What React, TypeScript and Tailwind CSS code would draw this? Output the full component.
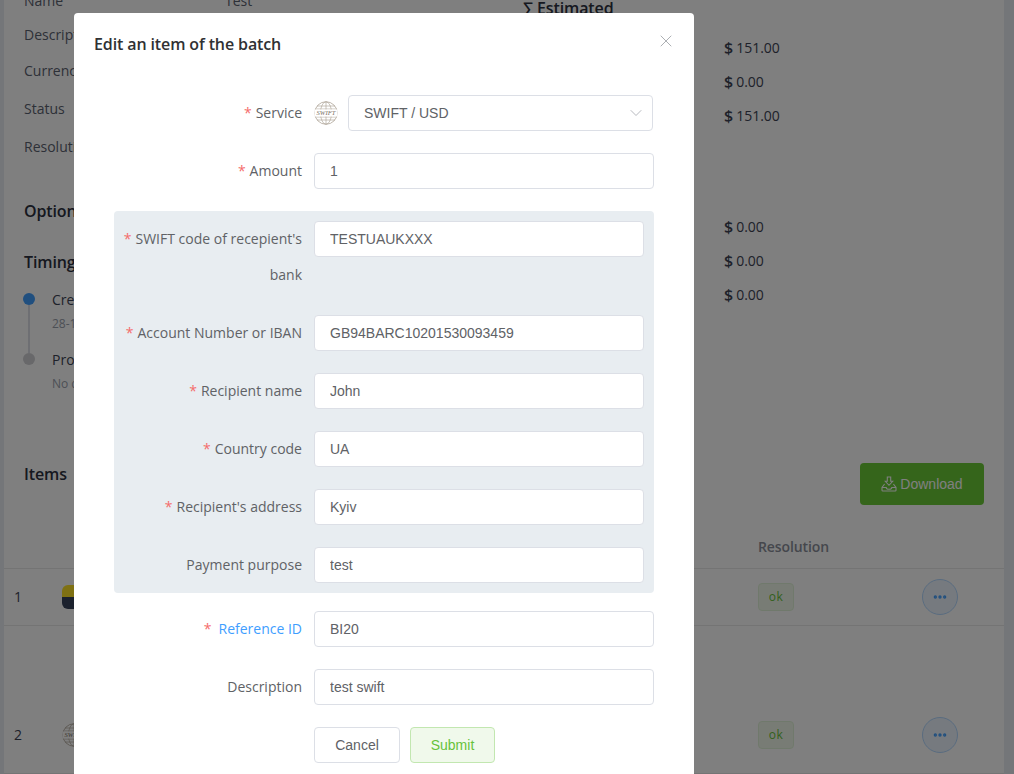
import { ChevronDown, MoreHorizontal, X } from 'lucide-react';

const sans = "font-['Open_Sans',sans-serif]";
const arial = "font-['Liberation_Sans',Arial,sans-serif]";

const SwiftLogo = ({ size }: { size: number }) => (
  <svg width={size} height={size} viewBox="0 0 48 48" fill="none" stroke="#aea598" strokeWidth="1.3">
    <circle cx="24" cy="24" r="22.5" strokeWidth="1.6" />
    <ellipse cx="24" cy="24" rx="11" ry="22.5" />
    <path d="M24 1.5v45M6 10h36M3 16h42M3 32h42M6 38h36" />
    <rect x="1" y="17" width="46" height="14" fill="#fff" stroke="none" />
    <text
      x="24"
      y="28.5"
      textAnchor="middle"
      fontSize="13"
      textLength="38"
      lengthAdjust="spacingAndGlyphs"
      fontFamily="'Liberation Serif', serif"
      fontStyle="italic"
      fill="#7a7165"
      stroke="none"
    >
      SWIFT
    </text>
  </svg>
);

const InfoRow = ({ label, value, h }: { label: string; value?: string; h: string }) => (
  <div className={`flex items-center text-sm text-[#5b6270] ${h}`}>
    <span className="w-[201px]">{label}</span>
    {value && <span>{value}</span>}
  </div>
);

const Money = ({ value }: { value: string }) => (
  <div className="flex h-[34px] items-center gap-[3px] text-sm text-[#3c4354]">
    <span className="text-base font-semibold">$</span>
    <span>{value}</span>
  </div>
);

const ItemRow = ({ num, h, pt, icon }: { num: string; h: string; pt: string; icon: React.ReactNode }) => (
  <div className={`flex items-start border-b border-[#e8e8e8] pl-[10px] ${h} ${pt}`}>
    <span className="flex h-9 w-[48px] items-center text-sm text-[#3c4354]">{num}</span>
    <div className="flex h-9 w-[696px] items-center">{icon}</div>
    <div className="flex h-9 w-[164px] items-center">
      <span className="flex h-7 w-9 items-center justify-center rounded border border-[#e1f3d8] bg-[#f0f9eb] text-xs tracking-[0.5px] text-[#67c23a]">
        ok
      </span>
    </div>
    <span className="flex h-9 w-9 items-center justify-center rounded-full border border-[#b3d8ff] bg-[#ecf5ff] text-[#409eff]">
      <MoreHorizontal size={16} strokeWidth={3} />
    </span>
  </div>
);

const Background = () => (
  <div className={`flex h-full bg-[#e9edf2] px-[4px] pr-[10px] ${sans}`}>
    <div className="h-full w-[1000px] overflow-hidden bg-white">
      <div className="mt-[-16px] flex">
        <div className="w-[719px] pl-5">
          <InfoRow label="Name" value="Test" h="h-[34px]" />
          <InfoRow label="Description" h="h-[34px]" />
          <InfoRow label="Currency" h="h-[38px]" />
          <InfoRow label="Status" h="h-[38px]" />
          <InfoRow label="Resolution" h="h-[38px]" />
          <h3 className="mt-[33px] flex h-[24px] items-center text-base font-semibold tracking-[-0.12px] text-[#2c3140]">Options</h3>
          <h3 className="mt-[27px] flex h-[24px] items-center text-base font-semibold tracking-[-0.12px] text-[#2c3140]">Timing</h3>
          <div className="mt-[14px] flex gap-[17px]">
            <div className="-ml-px flex flex-col items-center pt-[5px]">
              <span className="h-3 w-3 rounded-full bg-[#409eff]" />
              <span className="h-12 w-0.5 bg-[#dcdfe6]" />
              <span className="h-3 w-3 rounded-full bg-[#d0d0d4]" />
            </div>
            <div className="text-sm text-[#3c4354]">
              <div className="flex h-6 items-center">Created</div>
              <div className="flex h-6 items-center text-xs text-[#9aa0ab]">28-11-2022</div>
              <div className="mt-3 flex h-6 items-center">Processed</div>
              <div className="flex h-6 items-center text-xs text-[#9aa0ab]">No data</div>
            </div>
          </div>
        </div>
        <div className="ml-[-200px] w-[480px] pt-[12px]">
          <div className="flex h-[24px] items-center text-base font-semibold tracking-[-0.12px] text-[#2c3140]">∑ Estimated</div>
          <div className="mt-[11px] pl-[201px]">
            <Money value="151.00" />
            <Money value="0.00" />
            <Money value="151.00" />
            <div className="h-[77px]" />
            <Money value="0.00" />
            <Money value="0.00" />
            <Money value="0.00" />
          </div>
        </div>
      </div>
      <div className="mt-[66px] flex items-start justify-between pl-5 pr-5">
        <h3 className="flex h-6 items-center text-base font-semibold tracking-[-0.12px] text-[#2c3140]">Items</h3>
        <button className={`mt-px flex h-[42px] w-[124px] items-center justify-center gap-[3px] rounded bg-[#6aca36] text-sm text-white ${arial}`}>
          <svg width="16" height="16" viewBox="0 0 16 16" fill="none" stroke="currentColor" strokeWidth="1.1">
            <path d="M3.6 8 1 11.4v2.8c0 .4.3.8.8.8h12.4c.5 0 .8-.4.8-.8v-2.8L12.4 8" />
            <path d="M1 11.5h4.2c0 1.2 1.2 1.8 2.8 1.8s2.8-.6 2.8-1.8H15" />
            <path d="M6.3 1h3.4v4.3h2L8 9.3 4.3 5.3h2z" />
          </svg>
          Download
        </button>
      </div>
      <div className="mt-[21px] flex h-[43px] items-center border-b border-[#e8e8e8] pl-[754px] text-sm font-semibold tracking-[-0.1px] text-[#8b8f9a]">
        Resolution
      </div>
      <ItemRow
        num="1"
        h="h-[57px]"
        pt="pt-[10px]"
        icon={
          <div className="flex h-6 w-6 flex-col overflow-hidden rounded-md">
            <span className="h-3 bg-[#ffe226]" />
            <span className="h-3 bg-[#38445c]" />
          </div>
        }
      />
      <ItemRow num="2" h="h-[148px]" pt="pt-[91px]" icon={<SwiftLogo size={24} />} />
    </div>
  </div>
);

const Field = ({
  label,
  value,
  required = true,
  link = false,
}: {
  label: string;
  value: string;
  required?: boolean;
  link?: boolean;
}) => (
  <div className="flex">
    <label className={`w-[200px] shrink-0 pr-3 text-right text-sm leading-9 text-[#606266] ${sans}`}>
      {required && <span className={`text-[#f56c6c] ${link ? 'mr-[7px]' : 'mr-1'}`}>*</span>}
      <span className={link ? 'text-[#409eff]' : ''}>{label}</span>
    </label>
    <input
      readOnly
      value={value}
      className={`h-9 min-w-0 flex-1 rounded border border-[#dcdfe6] bg-white px-[15px] text-sm text-[#606266] outline-none ${arial}`}
    />
  </div>
);

const EditModal = () => (
  <div className="absolute left-[74px] top-[13px] h-[761px] w-[620px] rounded-t-sm bg-white">
    <div className="flex h-[43px] items-end justify-between pl-5 pr-[18px]">
      <h2 className={`text-base font-semibold leading-6 tracking-[-0.12px] text-[#303133] ${sans}`}>Edit an item of the batch</h2>
      <X size={20} strokeWidth={0.9} className="mb-[5px] text-[#909399]" />
    </div>
    <div className="mt-[39px] flex flex-col gap-[22px] px-10">
      <div className="flex">
        <label className={`w-[200px] pr-3 text-right text-sm leading-9 text-[#606266] ${sans}`}>
          <span className="mr-1 text-[#f56c6c]">*</span>Service
        </label>
        <span className="flex h-9 w-[34px] items-center">
          <SwiftLogo size={24} />
        </span>
        <div className={`flex h-9 w-[305px] items-center justify-between rounded border border-[#dcdfe6] pl-[15px] pr-[6px] text-sm text-[#606266] ${arial}`}>
          SWIFT / USD
          <ChevronDown size={20} strokeWidth={1} className="text-[#a8abb2]" />
        </div>
      </div>
      <Field label="Amount" value="1" />
      <div className="-mb-1 flex flex-col gap-[22px] rounded bg-[#e8edf1] py-[10px] pr-[10px]">
        <Field label="SWIFT code of recepient's bank" value="TESTUAUKXXX" />
        <Field label="Account Number or IBAN" value="GB94BARC10201530093459" />
        <Field label="Recipient name" value="John" />
        <Field label="Country code" value="UA" />
        <Field label="Recipient's address" value="Kyiv" />
        <Field label="Payment purpose" value="test" required={false} />
      </div>
      <Field label="Reference ID" value="BI20" link />
      <Field label="Description" value="test swift" required={false} />
      <div className={`flex gap-[10px] pl-[200px] text-sm ${arial}`}>
        <button className="h-9 w-[86px] rounded border border-[#dcdfe6] bg-white text-[#606266]">Cancel</button>
        <button className="h-9 w-[85px] rounded border border-[#c2e7b0] bg-[#f0f9eb] text-[#67c23a]">Submit</button>
      </div>
    </div>
  </div>
);

export default function App() {
  return (
    <div className="relative h-[774px] w-[1014px] overflow-hidden">
      <Background />
      <div className="absolute inset-0 bg-black/50" />
      <EditModal />
    </div>
  );
}
